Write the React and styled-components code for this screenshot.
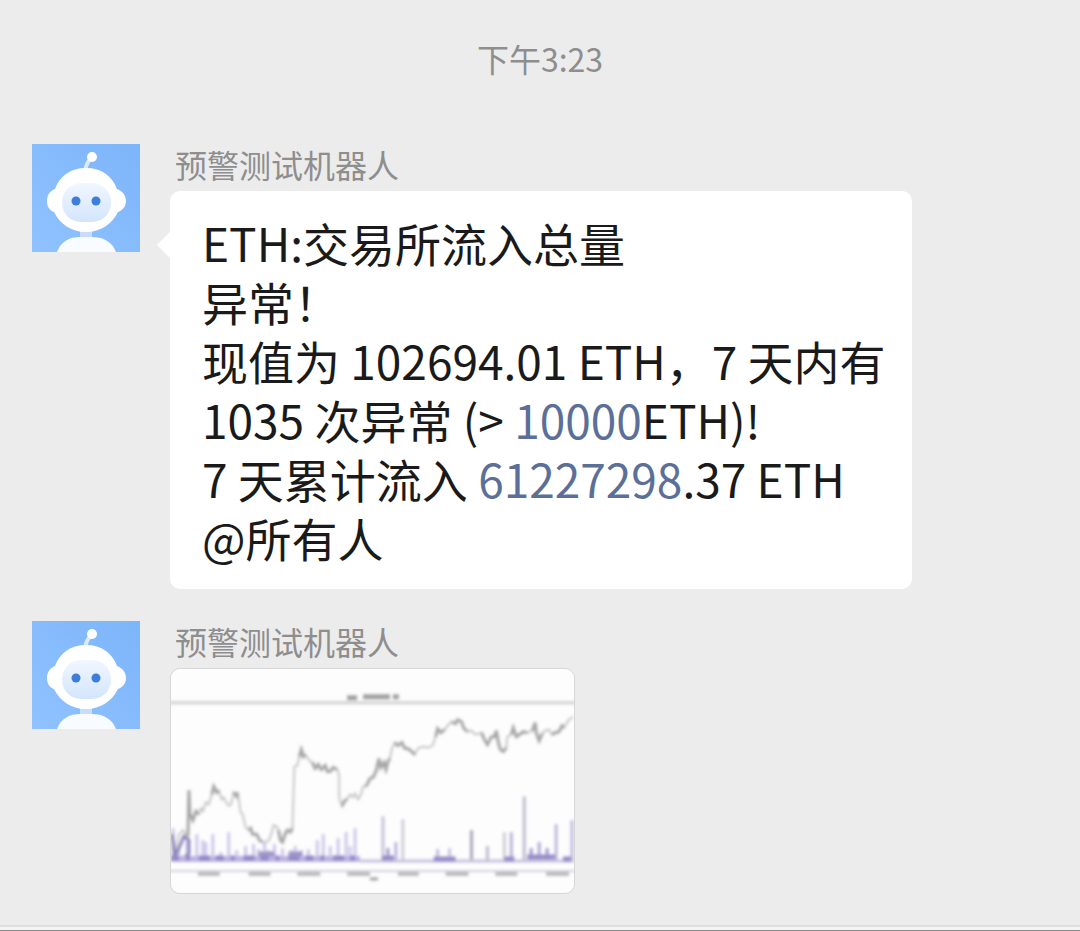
import React from 'react'
import styled, { createGlobalStyle } from 'styled-components'

const SENDER = '预警测试机器人'

// price curve of the preview chart, in its 405 x 225 view box
const pricePoints = [
    [1, 171], [5, 181], [8, 166], [12, 162], [17, 168], [18, 122], [19, 146], [22, 152], [25, 143], [28, 146],
    [30, 140], [32, 143], [35, 134], [38, 136], [41, 126], [43, 118], [46, 124], [48, 122], [51, 131], [53, 129],
    [57, 137], [60, 137], [63, 124], [66, 128], [67, 124], [70, 144], [72, 146], [75, 159], [78, 162], [80, 160],
    [82, 166], [86, 166], [89, 172], [92, 174], [98, 173], [101, 165], [103, 157], [106, 158], [108, 162],
    [110, 172], [112, 174], [115, 165], [117, 162], [120, 164], [122, 160], [124, 98], [127, 97], [129, 88],
    [131, 81], [133, 88], [135, 86], [139, 92], [142, 94], [145, 100], [148, 96], [151, 101], [155, 97],
    [157, 103], [160, 103], [163, 99], [167, 101], [169, 107], [169, 130], [172, 138], [174, 133], [177, 131],
    [180, 126], [183, 129], [185, 125], [188, 131], [191, 126], [193, 118], [196, 118], [200, 110], [203, 109],
    [206, 103], [209, 90], [211, 99], [214, 94], [216, 101], [218, 93], [220, 90], [222, 80], [225, 74], [228, 77],
    [232, 74], [235, 80], [238, 80], [242, 83], [245, 86], [248, 80], [253, 78], [258, 79], [263, 77], [266, 68],
    [268, 60], [271, 64], [275, 61], [278, 57], [282, 53], [286, 55], [288, 51], [292, 53], [294, 59], [298, 63],
    [302, 62], [306, 66], [312, 64], [315, 71], [318, 76], [322, 68], [325, 68], [327, 62], [329, 74], [331, 81],
    [334, 83], [337, 79], [338, 68], [342, 66], [344, 59], [347, 68], [350, 66], [354, 63], [358, 64], [363, 62],
    [366, 54], [367, 64], [370, 72], [373, 65], [376, 62], [380, 61], [383, 66], [386, 64], [390, 63],
    [393, 57], [395, 59], [399, 52], [404, 48],
]

// darker patches where the curve is dense
const denseSpans = [
    [17, 28], [40, 50], [62, 68], [76, 92], [108, 122], [128, 136], [142, 167],
    [171, 177], [196, 220], [225, 245], [266, 275], [280, 298], [312, 337], [340, 358], [363, 373], [383, 395],
]

// x and height of each inflow bar
const inflowBars = [
    [2, 32], [5, 14], [8, 10], [16, 24], [26, 26], [32, 20], [35, 18], [42, 26], [50, 8], [58, 28], [66, 10],
    [75, 14], [83, 16], [88, 11], [94, 18], [98, 10], [104, 16], [112, 12], [121, 10], [125, 14],
    [131, 10], [138, 11], [147, 20], [153, 26], [160, 14], [168, 22], [176, 28], [180, 14], [185, 32],
]

const lateBars = [
    [213, 44, '#c6c3d8'], [218, 12, '#9f96ce'], [226, 18, '#bab4de'], [233, 41, '#cfcdd8'],
    [268, 11, '#c0badf'], [280, 12, '#c7c3dd'], [302, 30, '#a9a6bc'], [318, 14, '#bebccd'],
    [335, 28, '#cfcdd8'], [342, 28, '#b9b3d8'], [355, 64, '#bebbcf'], [362, 12, '#9f96ce'],
    [370, 18, '#b0a8d8'], [378, 12, '#9f96ce'], [387, 36, '#bdb7dd'], [403, 40, '#bdb7dd'],
]

function RobotAvatar() {
    return (
        <Avatar viewBox="0 0 108 108" role="img" aria-label={SENDER}>
            <defs>
                <linearGradient id="sky" x1="1" y1="0" x2="0" y2="1">
                    <stop offset="0" stopColor="#7db5fa" />
                    <stop offset="1" stopColor="#90c2ff" />
                </linearGradient>
                <linearGradient id="face" x1="0" y1="0" x2="0" y2="1">
                    <stop offset="0" stopColor="#f1f7ff" />
                    <stop offset="1" stopColor="#d3e5fd" />
                </linearGradient>
            </defs>
            <rect width="108" height="108" fill="url(#sky)" />
            <path d="M53 26Q55 18 60 13" stroke="#d9e9ff" strokeWidth="4" fill="none" />
            <circle cx="60" cy="13" r="5" fill="#fff" />
            <rect x="48" y="85" width="12" height="10" fill="#c7ddfc" />
            <path d="M25 108C29 97 38 93 48 93H60C70 93 80 97 84 108Z" fill="#f8fbff" />
            <path
                d="M54 24C70 24 80 32 85 45C90 47 94 51 94 57C94 62 91 66 86 68C80 80 69 88 54 88C39 88 28 80 22 68C17 66 15 62 15 57C15 51 18 47 23 45C28 32 38 24 54 24Z"
                fill="#fff"
            />
            <rect x="30" y="39" width="49" height="39" rx="19" fill="url(#face)" />
            <circle cx="44" cy="57" r="4.5" fill="#3d7edb" />
            <circle cx="64" cy="57" r="4.5" fill="#3d7edb" />
        </Avatar>
    )
}

function ChartPreview() {
    return (
        <ChartCard viewBox="0 0 405 225" role="img" aria-label="ETH">
            <defs>
                <filter id="soft" x="-5%" y="-5%" width="110%" height="110%">
                    <feGaussianBlur stdDeviation="1.8" />
                </filter>
            </defs>
            <rect width="405" height="225" fill="#fdfdfd" />
            <g filter="url(#soft)" fill="none">
                <path d="M-4 34H409" stroke="#d2d2d2" strokeWidth="3" />
                <path d="M177 29H187M193 28H220M223 28H229" stroke="#a0a0a0" strokeWidth="5" />
                <polyline points={pricePoints.join(' ')} stroke="#c6c6c6" strokeWidth="2" />
                {denseSpans.map(([from, to]) => (
                    <polyline
                        key={from}
                        points={pricePoints.filter(([x]) => x >= from && x <= to).join(' ')}
                        stroke="#a6a6a6"
                        strokeWidth="3"
                    />
                ))}
                {inflowBars.map(([x, h]) => (
                    <path key={x} d={`M${x} 192V${192 - h}`} stroke="#cdc7ea" strokeWidth="3" />
                ))}
                {lateBars.map(([x, h, color]) => (
                    <path key={x} d={`M${x} 192V${192 - h}`} stroke={color} strokeWidth="3" />
                ))}
                <path d="M1 166L4 188L8 180L13 168L18 172L18 186L12 190" stroke="#8a84b4" strokeWidth="3" />
                <path d="M0 191H190" stroke="#bdb4e2" strokeWidth="6" />
                <path d="M0 190H185" stroke="#9288c6" strokeWidth="5" strokeDasharray="8 7 4 9 11 6" />
                <path d="M88 186H104M118 186H132" stroke="#9d95c8" strokeWidth="5" />
                <path d="M190 193H405" stroke="#c6c1dd" strokeWidth="3" />
                <path d="M212 190H224M264 191H286M335 191H345M358 189H386M394 191H402" stroke="#978dca" strokeWidth="5" />
                <path d="M-4 203H409" stroke="#d4d2de" strokeWidth="2" />
                <path
                    d="M27 206H49M78 206H100M127 206H150M177 206H200M228 206H249M276 206H299M326 206H348M377 206H400"
                    stroke="#bcbcbc"
                    strokeWidth="4"
                />
                <path d="M200 211H208" stroke="#a0a0a0" strokeWidth="3" />
            </g>
        </ChartCard>
    )
}

function App() {
    return (
        <>
            <GlobalStyle />
            <Chat>
                <Time>下午3:23</Time>
                <Message>
                    <RobotAvatar />
                    <Content>
                        <Sender>{SENDER}</Sender>
                        <Bubble>
                            <p>ETH:交易所流入总量</p>
                            <p>异常！</p>
                            <p>现值为 102694.01 ETH，7 天内有</p>
                            <p>1035 次异常 (&gt; <a href="tel:10000">10000</a>ETH)!</p>
                            <p>7 天累计流入 <a href="tel:61227298">61227298</a>.37 ETH</p>
                            <p>@所有人</p>
                        </Bubble>
                    </Content>
                </Message>
                <Message>
                    <RobotAvatar />
                    <Content>
                        <Sender>{SENDER}</Sender>
                        <ChartPreview />
                    </Content>
                </Message>
                <BottomBar />
            </Chat>
        </>
    )
}

export default App

const GlobalStyle = createGlobalStyle`
    * {
        box-sizing: border-box;
    }

    body {
        margin: 0;
        background-color: #ececec;
        font-family: "Noto Sans CJK SC", sans-serif;
    }

    p {
        margin: 0;
    }
`

const Chat = styled.main`
    display: flex;
    flex-direction: column;
    min-height: 100vh;
    padding-top: 34px;
`

const Time = styled.time`
    margin-bottom: 62px;
    text-align: center;
    font-size: 32px;
    line-height: 48px;
    color: #8e8e8e;
`

const Message = styled.section`
    display: flex;
    align-items: flex-start;
    gap: 30px;
    padding: 0 32px;
    margin-bottom: 32px;

    &:last-of-type {
        margin-bottom: 24px;
    }
`

const Avatar = styled.svg`
    flex: none;
    width: 108px;
    height: 108px;
`

const Content = styled.div`
    flex: 1;
    min-width: 0;
`

const Sender = styled.div`
    padding-left: 5px;
    margin-bottom: 7px;
    font-size: 32px;
    line-height: 40px;
    color: #8e8e8e;
`

const Bubble = styled.div`
    position: relative;
    max-width: 742px;
    padding: 22px 20px 22px 32px;
    border-radius: 10px;
    background-color: #fff;
    font-size: 46px;
    line-height: 59px;
    color: #1a1a1a;

    a {
        color: #5b6f98;
        text-decoration: none;
    }

    &::before {
        content: '';
        position: absolute;
        top: 40px;
        left: -13px;
        border: 14px solid transparent;
        border-left-width: 0;
        border-right-color: #fff;
    }
`

const ChartCard = styled.svg`
    display: block;
    width: 100%;
    max-width: 405px;
    border: 1px solid #d6d6d6;
    border-radius: 10px;
`

const BottomBar = styled.footer`
    height: 6px;
    margin-top: auto;
    border-top: 2px solid #dedede;
    border-bottom: 1px solid #888;
    background-color: #f4f4f4;
`
